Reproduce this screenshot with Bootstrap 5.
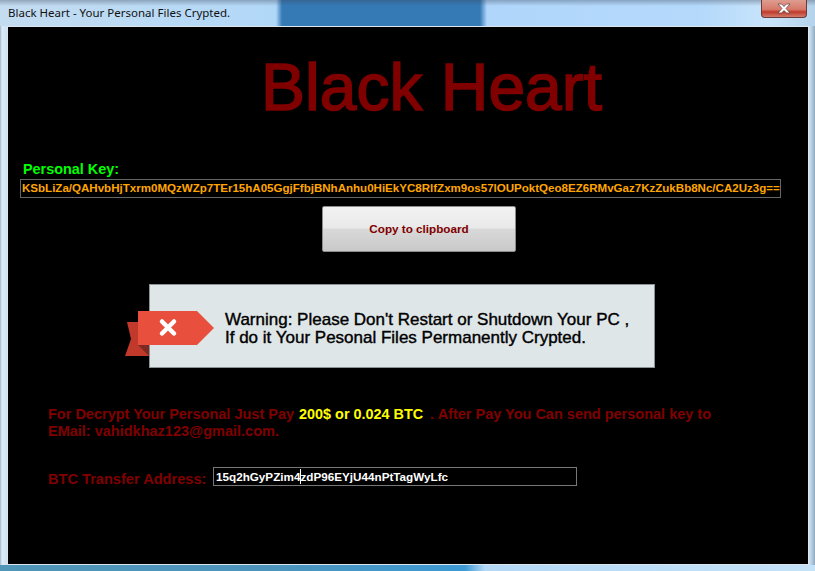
<!DOCTYPE html>
<html lang="en">
<head>
<meta charset="utf-8">
<title>Black Heart</title>
<link rel="stylesheet" href="https://cdn.jsdelivr.net/npm/bootstrap@5.3.0/dist/css/bootstrap.min.css">
<style>
html,body{margin:0;height:100%;background:#000;overflow:hidden}
.win-frame{width:815px;height:571px;padding:0 6px 6px 7px;font-family:"Liberation Sans",Arial,sans-serif;
 background:
  linear-gradient(90deg,#4f96b8 0,#4c94bc 270px,#3d9ad4 465px,#b4d8f6 485px,#c4e2f8 815px) bottom/100% 6px no-repeat,
  linear-gradient(rgba(55,65,85,.35),rgba(55,65,85,0)) top/100% 6px no-repeat,
  linear-gradient(90deg,#c4dcf0 0,#b2d8f8 272px,#b0d6f8 276px,#357ab5 282px,#357ab5 480px,#b0d6fb 487px,#b4d9fb 700px,#c8e4fa 770px,#b4d2ea 815px) top/100% 26px no-repeat,
  linear-gradient(90deg,#9fb4c8 0,#dcebf7 2px,#cfe3f4 6px,#cfe3f4 809px,#a9c2d8 813px,#8fa6ba 815px);}
.win-bar{height:26px}
.win-title{font:11.5px "Noto Sans",sans-serif;color:#111;padding:4px 0 0 1px;line-height:18px}
.win-close{width:46px;height:18px;margin-right:2px;border:1px solid #6b3a38;border-top:0;border-radius:0 0 4px 4px;
 background:linear-gradient(#dd9d90,#d8796a 55%,#bf3b2c 70%,#d27b6c);}
.win-panel{background:#000;border:1px solid #dbe6ee;height:539px}
.big-title{font-size:66px;font-weight:400;-webkit-text-stroke:1.5px #800000;color:#800000;line-height:72px;margin:24px 0 0 253px}
.key-label{font-size:14.4px;font-weight:700;color:#0f0;line-height:17px;margin:38px 0 0 15px}
.key-box{margin:1px 27px 0 12px;height:19px;border:1px solid #666;color:#ffa500;font-size:11.55px;font-weight:700;line-height:17px;padding-left:1px;white-space:nowrap;overflow:hidden}
.copy-btn{display:block;width:194px;height:46px;margin:8px 0 0 314px;padding:0;border:1px solid #8c8c8c;border-radius:2px;
 color:#800000;font-size:11.7px;font-weight:700;background:linear-gradient(#f2f2f2,#e9e9e9 48%,#d9d9d9 50%,#c9c9c9)}
.warn-box{position:relative;width:506px;height:84px;margin:32px 0 0 141px;background:#dfe6e8;border:1px solid #8c9396;color:#000;font-size:17px;line-height:18px;padding:26px 0 0 75px;-webkit-text-stroke:.4px #000;white-space:nowrap}
.warn-ribbon{position:absolute;left:-25px;top:26px}
.pay-text{margin:38px 0 0 40px;font-size:14.5px;font-weight:700;line-height:17px;color:#800000;width:690px}
.pay-hi{color:#ff0;font-size:14.4px;margin:0 3px 0 1px}
.addr-label{font-size:14.6px;font-weight:700;color:#800000;white-space:nowrap;padding-top:2px;margin-left:40px;width:165px}
.addr-box{width:364px;height:19px;border:1px solid #777;color:#fff;font-size:11.7px;font-weight:700;line-height:17px;padding-left:2px;white-space:nowrap}
.addr-caret{display:inline-block;width:1px;height:15px;margin:0 -.5px;background:#fff;vertical-align:-3px}
.addr-row{margin-top:27px}
</style>
</head>
<body>
<div class="win-frame d-flex flex-column">
  <div class="win-bar d-flex justify-content-between align-items-start">
    <div class="win-title">Black Heart - Your Personal Files Crypted.</div>
    <div class="win-close d-flex align-items-center justify-content-center">
      <svg width="14" height="11" viewBox="0 0 14 11"><path d="M1 1h3.500L7 3.500 9.500 1H13L9 5.500 13 10H9.500L7 7.500 4.500 10H1l4-4.500z" fill="#fff" stroke="#5a3a3a" stroke-width=".7"/></svg>
    </div>
  </div>
  <div class="win-panel">
    <div class="big-title">Black Heart</div>
    <div class="key-label">Personal Key:</div>
    <div class="key-box">KSbLiZa/QAHvbHjTxrm0MQzWZp7TEr15hA05GgjFfbjBNhAnhu0HiEkYC8RlfZxm9os57lOUPoktQeo8EZ6RMvGaz7KzZukBb8Nc/CA2Uz3g==</div>
    <button type="button" class="copy-btn">Copy to clipboard</button>
    <div class="warn-box">
      <svg class="warn-ribbon" width="90" height="46" viewBox="0 0 90 46">
        <path d="M2 11H24V45H0L6 28z" fill="#c0392b"/>
        <path d="M13 34H24V45z" fill="#7f2a20"/>
        <path d="M13 0H72L89 17 72 34H13z" fill="#e94f3d"/>
        <path d="M37 10.500 49 22.500M49 10.500 37 22.500" stroke="#fff" stroke-width="4.500" stroke-linecap="round"/>
      </svg>
      Warning: Please Don't Restart or Shutdown Your PC ,<br>If do it Your Pesonal Files Permanently Crypted.
    </div>
    <div class="pay-text">For Decrypt Your Personal Just Pay <span class="pay-hi">200$ or 0.024 BTC</span> . After Pay You Can send personal key to EMail: vahidkhaz123@gmail.com.</div>
    <div class="addr-row d-flex">
      <div class="addr-label">BTC Transfer Address:</div>
      <div class="addr-box">15q2hGyPZim4<span class="addr-caret"></span>zdP96EYjU44nPtTagWyLfc</div>
    </div>
  </div>
</div>
</body>
</html>
